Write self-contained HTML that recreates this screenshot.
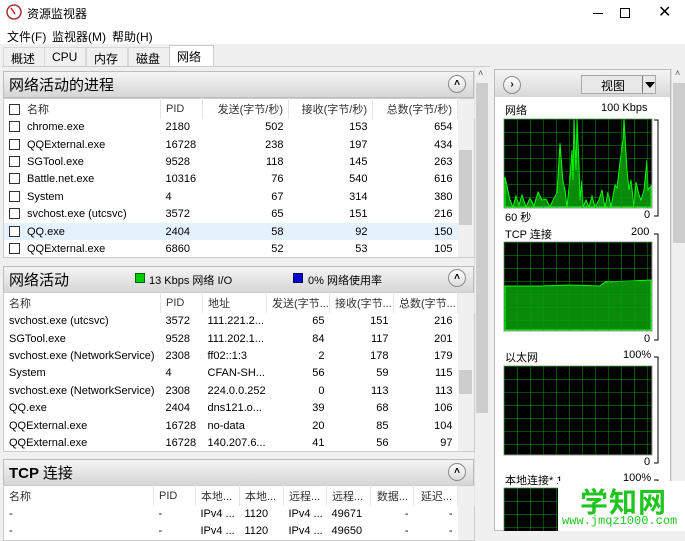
<!DOCTYPE html>
<html><head><meta charset="utf-8"><style>
*{box-sizing:border-box;margin:0;padding:0}
body{width:685px;height:531px;overflow:hidden;background:#f0f0f0;font-family:"Liberation Sans","Noto Sans CJK SC",sans-serif;font-size:11px;color:#000;position:relative}
.abs{position:absolute}
.title{position:absolute;left:0;top:0;width:685px;height:27px;background:#fff}
.menu{position:absolute;left:0;top:27px;width:685px;height:17px;background:#fff}
.tab{position:absolute;top:47px;height:19px;border:1px solid #d9d9d9;border-bottom:none;background:#f0f0f0;font-size:12px;padding:2px 0 0 7px}
.hdr{position:absolute;left:3px;width:471px;height:27px;background:linear-gradient(#f4f4f4,#d6d6d6);border:1px solid #bcbcbc;font-size:15px;padding:2px 0 0 5px}
.circ{position:absolute;width:18px;height:18px;border-radius:50%;border:1px solid #8a8a8a;background:linear-gradient(#fff,#ddd);font-size:10px;text-align:center;line-height:15px;font-weight:bold}
table{border-collapse:collapse;table-layout:fixed;position:absolute;background:#fff}
td{height:17.4px;white-space:nowrap;overflow:hidden;padding:0 5px;font-size:11px}
td.r{text-align:right}
tr.h td{height:20px;color:#333;border-right:1px solid #e5e5e5}
.cb{display:inline-block;width:11px;height:11px;border:1px solid #333;vertical-align:-2px;margin-right:7px;background:#fff}
.sb{position:absolute;width:15px;background:#f0f0f0}
.lbl{position:absolute;font-size:11px}
</style></head><body>
<div class="title"></div>
<div class="menu"></div>
<svg class="abs" style="left:6px;top:4px" width="16" height="16"><circle cx="8" cy="8" r="7" fill="#fff" stroke="#a33" stroke-width="1.5"/><line x1="5" y1="4" x2="9" y2="10" stroke="#c22" stroke-width="1.5"/></svg>
<div class="abs" style="left:27px;top:5px;font-size:12px">资源监视器</div>
<div class="abs" style="left:593px;top:13px;width:10px;height:1px;background:#000"></div>
<div class="abs" style="left:620px;top:8px;width:10px;height:10px;border:1px solid #000"></div>
<div class="abs" style="left:658px;top:2px;font-size:16px">✕</div>
<div class="abs" style="left:7px;top:28px;font-size:12px">文件(F)</div>
<div class="abs" style="left:52px;top:28px;font-size:12px">监视器(M)</div>
<div class="abs" style="left:112px;top:28px;font-size:12px">帮助(H)</div>
<div class="tab" style="left:3px;width:42px">概述</div>
<div class="tab" style="left:44px;width:42px">CPU</div>
<div class="tab" style="left:86px;width:42px">内存</div>
<div class="tab" style="left:128px;width:42px">磁盘</div>
<div class="tab" style="left:169px;top:45px;height:22px;width:45px;background:#fff;border-color:#ccc">网络</div>
<div class="abs" style="left:2px;top:66px;width:488px;height:1px;background:#ccc"></div>

<div class="sb" style="left:474px;top:68px;height:463px;background:#f0f0f0;border-left:1px solid #ddd"></div>
<div class="abs" style="left:478px;top:68px;font-size:9px;color:#555">˄</div>
<div class="abs" style="left:476px;top:83px;width:12px;height:330px;background:#cdcdcd"></div>

<div class="hdr" style="top:71px">网络活动的进程</div>
<div class="circ" style="left:448px;top:75px">˄</div>
<table style="left:3px;top:98px;width:471px;border:1px solid #ccc">
<colgroup><col style="width:157px"><col style="width:42px"><col style="width:86px"><col style="width:84px"><col style="width:85px"><col style="width:17px"></colgroup>
<tr class="h"><td><span class="cb"></span>名称</td><td>PID</td><td class="r">发送(字节/秒)</td><td class="r">接收(字节/秒)</td><td class="r">总数(字节/秒)</td><td style="background:#f0f0f0"></td></tr>
<tr><td><span class="cb"></span>chrome.exe</td><td>2180</td><td class="r">502</td><td class="r">153</td><td class="r">654</td><td rowspan="8" style="background:#f0f0f0;padding:0"><div style="width:13px;height:75px;background:#cdcdcd;margin-left:1px"></div></td></tr>
<tr><td><span class="cb"></span>QQExternal.exe</td><td>16728</td><td class="r">238</td><td class="r">197</td><td class="r">434</td></tr>
<tr><td><span class="cb"></span>SGTool.exe</td><td>9528</td><td class="r">118</td><td class="r">145</td><td class="r">263</td></tr>
<tr><td><span class="cb"></span>Battle.net.exe</td><td>10316</td><td class="r">76</td><td class="r">540</td><td class="r">616</td></tr>
<tr><td><span class="cb"></span>System</td><td>4</td><td class="r">67</td><td class="r">314</td><td class="r">380</td></tr>
<tr><td><span class="cb"></span>svchost.exe (utcsvc)</td><td>3572</td><td class="r">65</td><td class="r">151</td><td class="r">216</td></tr>
<tr style="background:#e5f1fb"><td><span class="cb"></span>QQ.exe</td><td>2404</td><td class="r">58</td><td class="r">92</td><td class="r">150</td></tr>
<tr><td><span class="cb"></span>QQExternal.exe</td><td>6860</td><td class="r">52</td><td class="r">53</td><td class="r">105</td></tr>
</table>

<div class="hdr" style="top:266px">网络活动</div>
<div class="abs" style="left:135px;top:273px;width:10px;height:10px;background:#0c0;border:1px solid #060"></div>
<div class="abs" style="left:149px;top:272px;font-size:11px">13 Kbps 网络 I/O</div>
<div class="abs" style="left:293px;top:273px;width:10px;height:10px;background:#00c;border:1px solid #006"></div>
<div class="abs" style="left:308px;top:272px;font-size:11px">0% 网络使用率</div>
<div class="circ" style="left:448px;top:269px">˄</div>
<table style="left:3px;top:292px;width:471px;border:1px solid #ccc">
<colgroup><col style="width:157px"><col style="width:42px"><col style="width:64px"><col style="width:63px"><col style="width:64px"><col style="width:64px"><col style="width:17px"></colgroup>
<tr class="h"><td>名称</td><td>PID</td><td>地址</td><td class="r">发送(字节...</td><td class="r">接收(字节...</td><td class="r">总数(字节...</td><td style="background:#f0f0f0"></td></tr>
<tr><td>svchost.exe (utcsvc)</td><td>3572</td><td>111.221.2...</td><td class="r">65</td><td class="r">151</td><td class="r">216</td><td rowspan="8" style="background:#f0f0f0;padding:0"><div style="width:13px;height:24px;background:#cdcdcd;margin-left:1px"></div></td></tr>
<tr><td>SGTool.exe</td><td>9528</td><td>111.202.1...</td><td class="r">84</td><td class="r">117</td><td class="r">201</td></tr>
<tr><td>svchost.exe (NetworkService)</td><td>2308</td><td>ff02::1:3</td><td class="r">2</td><td class="r">178</td><td class="r">179</td></tr>
<tr><td>System</td><td>4</td><td>CFAN-SH...</td><td class="r">56</td><td class="r">59</td><td class="r">115</td></tr>
<tr><td>svchost.exe (NetworkService)</td><td>2308</td><td>224.0.0.252</td><td class="r">0</td><td class="r">113</td><td class="r">113</td></tr>
<tr><td>QQ.exe</td><td>2404</td><td>dns121.o...</td><td class="r">39</td><td class="r">68</td><td class="r">106</td></tr>
<tr><td>QQExternal.exe</td><td>16728</td><td>no-data</td><td class="r">20</td><td class="r">85</td><td class="r">104</td></tr>
<tr><td>QQExternal.exe</td><td>16728</td><td>140.207.6...</td><td class="r">41</td><td class="r">56</td><td class="r">97</td></tr>
</table>

<div class="hdr" style="top:459px;font-weight:bold">TCP <span style="font-weight:normal">连接</span></div>
<div class="circ" style="left:448px;top:463px">˄</div>
<table style="left:3px;top:485px;width:471px;border:1px solid #ccc">
<colgroup><col style="width:150px"><col style="width:42px"><col style="width:44px"><col style="width:44px"><col style="width:43px"><col style="width:44px"><col style="width:43px"><col style="width:44px"><col style="width:17px"></colgroup>
<tr class="h"><td>名称</td><td>PID</td><td>本地...</td><td>本地...</td><td>远程...</td><td>远程...</td><td class="r">数据...</td><td class="r">延迟...</td><td style="background:#f0f0f0"></td></tr>
<tr><td>-</td><td>-</td><td>IPv4 ...</td><td>1120</td><td>IPv4 ...</td><td>49671</td><td class="r">-</td><td class="r">-</td><td rowspan="2" style="background:#f0f0f0"></td></tr>
<tr><td>-</td><td>-</td><td>IPv4 ...</td><td>1120</td><td>IPv4 ...</td><td>49650</td><td class="r">-</td><td class="r">-</td></tr>
</table>

<div class="abs" style="left:494px;top:69px;width:177px;height:462px;background:#fff;border:1px solid #bbb"></div>
<div class="abs" style="left:495px;top:70px;width:175px;height:27px;background:linear-gradient(#f4f4f4,#d8d8d8)"></div>
<div class="circ" style="left:503px;top:76px">›</div>
<div class="abs" style="left:581px;top:75px;width:75px;height:19px;border:1px solid #aaa;background:#e8e8e8;font-size:12px;padding:1px 0 0 19px">视图</div>
<div class="abs" style="left:642px;top:76px;width:1px;height:17px;background:#777"></div>
<div class="abs" style="left:645px;top:82px;width:0;height:0;border-left:5px solid transparent;border-right:5px solid transparent;border-top:6px solid #000"></div>
<div class="sb" style="left:671px;top:68px;height:463px;border-left:1px solid #ddd"></div>
<div class="abs" style="left:675px;top:68px;font-size:9px;color:#555">˄</div>
<div class="abs" style="left:673px;top:83px;width:12px;height:160px;background:#cdcdcd"></div>

<svg class="abs" style="left:0;top:0" width="685" height="531">
<defs>
<pattern id="g1" x="504" y="119" width="13" height="13" patternUnits="userSpaceOnUse"><path d="M0 0H13M0 0V13" stroke="#0a9a0a" stroke-width="1" fill="none"/></pattern>
<pattern id="g2" x="504" y="242" width="13" height="13" patternUnits="userSpaceOnUse"><path d="M0 0H13M0 0V13" stroke="#0a9a0a" stroke-width="1" fill="none"/></pattern>
<pattern id="g3" x="504" y="366" width="13" height="13" patternUnits="userSpaceOnUse"><path d="M0 0H13M0 0V13" stroke="#0a9a0a" stroke-width="1" fill="none"/></pattern>
<pattern id="g4" x="504" y="488" width="13" height="13" patternUnits="userSpaceOnUse"><path d="M0 0H13M0 0V13" stroke="#0a9a0a" stroke-width="1" fill="none"/></pattern>
</defs>
<rect x="504" y="119" width="148" height="89" fill="#000" stroke="#999"/>
<polygon points="505,207 505,177 510,200 513,207 516,196 519,205 522,195 526,207 530,198 534,206 538,192 542,200 546,199 550,207 554,198 557,193 560,143 563,182 565,190 567,207 570,178 572,150 573,180 574,119 576,170 577,119 579,165 580,200 582,180 583,207 586,200 589,207 592,196 595,207 599,200 602,190 605,208 608,192 611,207 615,185 617,188 620,162 623,140 624,119 627,170 629,190 631,180 634,207 636,182 639,195 641,200 644,190 647,160 648,190 651,186 651,207" fill="#0a8a0a" stroke="#0f0" stroke-width="1"/>
<rect x="504" y="119" width="148" height="89" fill="url(#g1)"/>
<rect x="504" y="242" width="148" height="89" fill="#000" stroke="#999"/>
<polygon points="505,330 505,286 540,286 570,285 600,286 605,282 630,281 651,280 651,330" fill="#0a8a0a" stroke="#0f0"/>
<rect x="504" y="242" width="148" height="89" fill="url(#g2)"/>
<rect x="504" y="366" width="148" height="89" fill="#000" stroke="#999"/>
<rect x="504" y="366" width="148" height="89" fill="url(#g3)"/>
<rect x="504" y="488" width="148" height="50" fill="#000" stroke="#999"/>
<rect x="504" y="488" width="148" height="50" fill="url(#g4)"/>
<path d="M654 120H658V216H654M654 234H658V340H654M654 357H658V463H654M654 480H658V531" stroke="#000" fill="none"/>
</svg>
<div class="lbl" style="left:505px;top:102px">网络</div>
<div class="lbl" style="left:601px;top:102px">100 Kbps</div>
<div class="lbl" style="left:505px;top:209px">60 秒</div>
<div class="lbl" style="left:644px;top:209px">0</div>
<div class="lbl" style="left:505px;top:226px">TCP 连接</div>
<div class="lbl" style="left:631px;top:226px">200</div>
<div class="lbl" style="left:644px;top:333px">0</div>
<div class="lbl" style="left:505px;top:349px">以太网</div>
<div class="lbl" style="left:623px;top:349px">100%</div>
<div class="lbl" style="left:644px;top:456px">0</div>
<div class="lbl" style="left:505px;top:472px">本地连接* 1</div>
<div class="lbl" style="left:623px;top:472px">100%</div>

<div class="abs" style="left:558px;top:481px;width:127px;height:50px;background:#fff"></div>
<div class="abs" style="left:580px;top:481px;font-size:28px;font-weight:bold;color:#22c422;letter-spacing:1px">学知网</div>
<div class="abs" style="left:562px;top:514px;font-size:12px;color:#22c422;font-family:'Liberation Mono',monospace">www.jmqz1000.com</div>
</body></html>
